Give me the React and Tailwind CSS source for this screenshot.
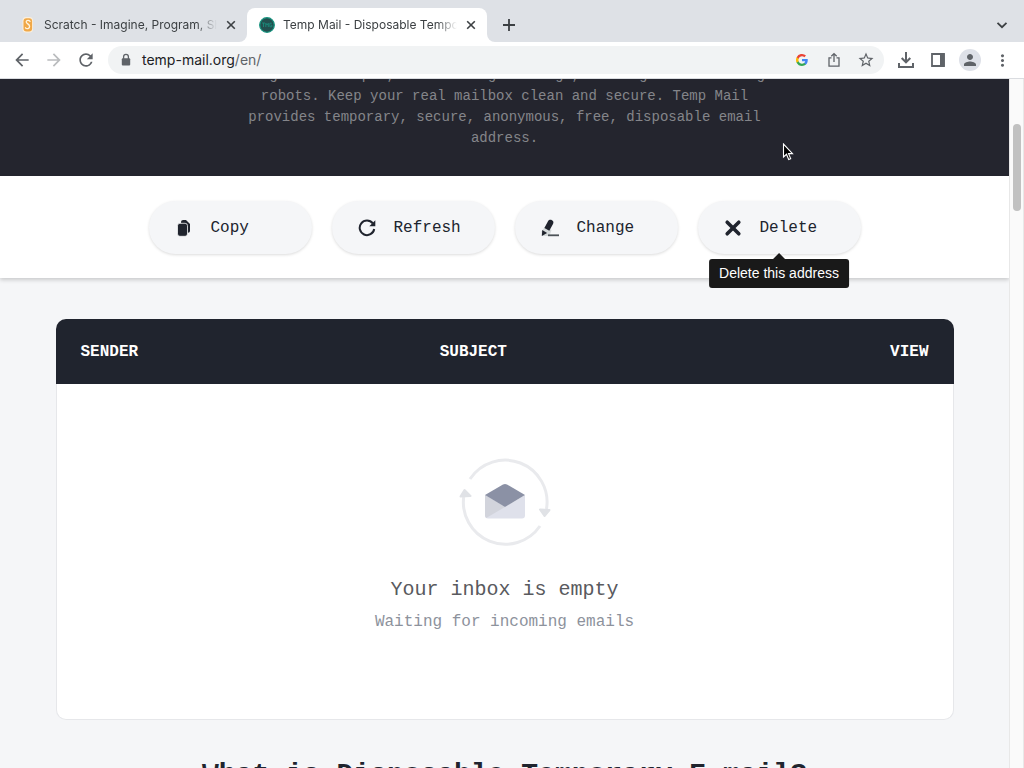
import { MdArrowBack, MdArrowForward, MdRefresh, MdStarOutline, MdPerson, MdMoreVert } from "react-icons/md";

function ScratchIcon() {
  return (
    <svg viewBox="0 0 16 18" className="h-[18px] w-4 shrink-0" aria-hidden="true">
      <rect x="2.500" y="1" width="10.500" height="15.500" rx="3.500" fill="#fbefdc" />
      <rect x="3.500" y="2.200" width="8.600" height="13.200" rx="3" fill="#f0a848" />
      <path
        d="M10 5.400C9 4 6.600 4.100 6.200 5.600 5.900 7.800 9.400 7.900 9.600 10.200 9.700 12.700 6.700 13.400 5.500 11.800"
        fill="none"
        stroke="#fff4df"
        strokeWidth="1.300"
        strokeLinecap="round"
      />
    </svg>
  );
}

function TempMailIcon() {
  return (
    <svg viewBox="0 0 16 16" className="size-4 shrink-0" aria-hidden="true">
      <circle cx="8" cy="8" r="7.300" fill="#23504f" stroke="#17937f" strokeWidth="1.300" />
      <path
        d="M3 6h3M4.500 6v4M6.800 10V6.200l1.300 1.900 1.200-1.900V10M12.800 6.200h-1.900v3.600h2V8.200h-1"
        fill="none"
        stroke="#1b8c7c"
        strokeWidth="0.900"
      />
    </svg>
  );
}

function CloseIcon() {
  return (
    <svg viewBox="0 0 10 10" className="size-[10px]" aria-hidden="true">
      <path d="M1.200 1.200l7.600 7.600M8.800 1.200L1.200 8.800" stroke="#3c4043" strokeWidth="1.600" />
    </svg>
  );
}

function Tab({ icon, title, active }) {
  return (
    <div
      className={
        active
          ? "relative flex h-[34px] w-60 items-center rounded-t-lg bg-white pr-[6px] pl-3"
          : "flex h-[34px] w-[239px] items-center pr-[6px] pl-3"
      }
    >
      {active && (
        <>
          <span className="absolute bottom-0 -left-2 size-2 bg-white" aria-hidden="true">
            <span className="block size-2 rounded-br-lg bg-[#dee1e6]" />
          </span>
          <span className="absolute -right-2 bottom-0 size-2 bg-white" aria-hidden="true">
            <span className="block size-2 rounded-bl-lg bg-[#dee1e6]" />
          </span>
        </>
      )}
      {icon}
      <span className="ml-2 flex-1 overflow-hidden mask-r-from-88% mask-r-to-100% text-xs whitespace-nowrap text-[#3c4043]">
        {title}
      </span>
      <button type="button" aria-label="Close tab" className="ml-1 grid size-5 place-items-center">
        <CloseIcon />
      </button>
    </div>
  );
}

function ToolButton({ label, children }) {
  return (
    <button type="button" aria-label={label} className="grid size-8 shrink-0 place-items-center text-[#5f6368]">
      {children}
    </button>
  );
}

function BrowserBar() {
  return (
    <header className="shrink-0 font-[Inter,sans-serif]">
      <div className="flex items-end bg-[#dee1e6] pt-2 pl-2">
        <Tab icon={<ScratchIcon />} title="Scratch - Imagine, Program, Share" />
        <Tab icon={<TempMailIcon />} title="Temp Mail - Disposable Temporary Email" active />
        <button type="button" aria-label="New tab" className="ml-[5px] grid size-[34px] place-items-center">
          <svg viewBox="0 0 12 12" className="size-3" aria-hidden="true">
            <path d="M6 0v12M0 6h12" stroke="#3c4043" strokeWidth="1.800" />
          </svg>
        </button>
        <button type="button" aria-label="Search tabs" className="mr-[5px] ml-auto grid size-[34px] place-items-center">
          <svg viewBox="0 0 12 12" className="size-3" aria-hidden="true">
            <path d="M1.500 3.800L6 8.200l4.500-4.400" fill="none" stroke="#3c4043" strokeWidth="1.800" />
          </svg>
        </button>
      </div>
      <div className="flex h-[37px] items-center border-b border-[#dadce0] bg-white px-[6px]">
        <ToolButton label="Back">
          <MdArrowBack size={20} />
        </ToolButton>
        <ToolButton label="Forward">
          <MdArrowForward size={20} className="text-[#babcbe]" />
        </ToolButton>
        <ToolButton label="Reload">
          <MdRefresh size={20} />
        </ToolButton>
        <div className="mx-[6px] flex h-7 flex-1 items-center rounded-full bg-[#f1f3f4] pr-[2px] pl-[11px]">
          <svg viewBox="0 0 14 14" className="size-[14px] text-[#5f6368]" aria-hidden="true">
            <path d="M4.600 6V3.800a2.400 2.400 0 0 1 4.800 0V6" fill="none" stroke="currentColor" strokeWidth="1.300" />
            <rect x="2.800" y="5.300" width="8.400" height="7.200" rx="1" fill="currentColor" />
          </svg>
          <div className="ml-[9px] flex-1 text-sm text-[#5f6368]">
            <span className="text-[#202124]">temp-mail.org</span>/en/
          </div>
          <ToolButton label="Google">
            <svg viewBox="0 0 24 24" className="size-3" aria-hidden="true">
              <path fill="#4285f4" d="M23.500 12.300c0-.9-.1-1.600-.2-2.400H12v4.500h6.500c-.3 1.500-1.100 2.800-2.400 3.700v3h3.900c2.200-2.100 3.500-5.100 3.500-8.800z" />
              <path fill="#34a853" d="M12 24c3.200 0 6-1.100 8-2.900l-3.900-3c-1.100.7-2.500 1.200-4.100 1.200-3.100 0-5.800-2.100-6.700-5H1.300v3.100C3.300 21.400 7.300 24 12 24z" />
              <path fill="#fbbc05" d="M5.300 14.300a7.200 7.200 0 0 1 0-4.600V6.600h-4a12 12 0 0 0 0 10.800z" />
              <path fill="#ea4335" d="M12 4.700c1.800 0 3.400.6 4.600 1.800L20 3.100A12 12 0 0 0 1.300 6.600l4 3.100c.9-2.800 3.600-5 6.700-5z" />
            </svg>
          </ToolButton>
          <ToolButton label="Share">
            <svg viewBox="0 0 14 16" className="h-4 w-[14px]" aria-hidden="true">
              <path d="M4.500 5.800H2v8.300h10V5.800H9.500M7 10V2M4.300 4.300L7 1.600l2.700 2.700" fill="none" stroke="currentColor" strokeWidth="1.300" />
            </svg>
          </ToolButton>
          <ToolButton label="Bookmark">
            <MdStarOutline size={18} />
          </ToolButton>
        </div>
        <ToolButton label="Downloads">
          <svg viewBox="0 0 18 18" className="size-[18px]" aria-hidden="true">
            <path d="M9 1v10M4.700 7L9 11.300 13.300 7M2 12v4h14v-4" fill="none" stroke="currentColor" strokeWidth="2" />
          </svg>
        </ToolButton>
        <ToolButton label="Side panel">
          <svg viewBox="0 0 16 16" className="size-4" aria-hidden="true">
            <path d="M2 2h12v12H2z" fill="none" stroke="currentColor" strokeWidth="1.800" />
            <path d="M10 2h4.500v12H10z" fill="currentColor" />
          </svg>
        </ToolButton>
        <ToolButton label="Profile">
          <span className="grid size-[22px] place-items-center rounded-full bg-[#dee1e8]">
            <MdPerson size={18} />
          </span>
        </ToolButton>
        <ToolButton label="Menu">
          <MdMoreVert size={19} />
        </ToolButton>
      </div>
    </header>
  );
}

function CopyIcon() {
  return (
    <svg viewBox="0 0 18 18" className="size-[18px]" aria-hidden="true">
      <path d="M6 3.200C6 1.900 7 1 8.200 1H11l4 4v6.800c0 1.200-.8 2-2 2H12" fill="#20242e" />
      <rect x="2.500" y="4.300" width="10" height="13" rx="2.400" fill="#20242e" stroke="#f5f6f8" strokeWidth="0.800" />
    </svg>
  );
}

function RefreshIcon() {
  return (
    <svg viewBox="0 0 18 18" className="size-[18px]" aria-hidden="true">
      <path d="M14.800 4.400A7.300 7.300 0 1 0 16.200 10" fill="none" stroke="#20242e" strokeWidth="2" />
      <path d="M17.300 1.200v6h-6z" fill="#20242e" />
    </svg>
  );
}

function ChangeIcon() {
  return (
    <svg viewBox="0 0 18 18" className="size-[18px]" aria-hidden="true">
      <path d="M.5 12.500l4-5.500 6 4-2 6H1z" fill="#d5dadb" />
      <path d="M7 2.200C8 .6 9.500.4 11 1.200s1.800 2.200 1 3.800L8.300 11.800 3.400 9z" fill="#20242e" />
      <path d="M1.300 11l4.800 3L.8 17z" fill="#20242e" />
      <path d="M7 16.300h11" stroke="#4c5258" strokeWidth="1.800" />
    </svg>
  );
}

function DeleteIcon() {
  return (
    <svg viewBox="0 0 18 18" className="size-[18px]" aria-hidden="true">
      <path d="M3.200 3.200l11.600 11.600M14.800 3.200L3.200 14.800" stroke="#20242e" strokeWidth="3.600" strokeLinecap="round" />
    </svg>
  );
}

function ActionButton({ icon, children }) {
  return (
    <button
      type="button"
      className="flex h-[53px] w-[163px] items-center gap-[18px] rounded-full bg-[#f5f6f8] pl-[26px] text-base text-[#20242e] shadow-[0_1px_3px_rgba(0,0,0,0.14)]"
    >
      {icon}
      {children}
    </button>
  );
}

function InboxIcon() {
  return (
    <svg viewBox="0 0 92 88" className="h-[88px] w-[92px] overflow-visible" aria-hidden="true">
      <g fill="none" stroke="#e9eaed" strokeWidth="3">
        <path d="M11 20A42 42 0 0 1 87.500 50" />
        <path d="M81 67A42 42 0 0 1 5 36" />
      </g>
      <path d="M1.500 37.500l4-6.500 6 6zM81 50.500l9.500.5-5 6z" fill="#e0e2e6" stroke="#e0e2e6" strokeWidth="2" strokeLinejoin="round" />
      <path d="M26 36v20.500a3 3 0 0 0 3 3h34a3 3 0 0 0 3-3V36L46 48z" fill="#dfe1eb" />
      <path d="M26 36v20.500c0 1 .4 1.800 1.200 2.400L46 48z" fill="#d2d4dc" />
      <path d="M26 36l18-10.500q2-1 4 0L66 36 46 48z" fill="#8b91a5" />
    </svg>
  );
}

export default function App() {
  return (
    <div className="flex h-screen flex-col overflow-hidden bg-white">
      <BrowserBar />
      <div className="flex min-h-0 flex-1">
        <main className="min-w-0 flex-1 overflow-hidden bg-[#f5f6f8] font-['Liberation_Mono',monospace]">
          <section className="flex h-[97px] flex-col items-center justify-end overflow-hidden bg-[#24252e] pb-[27px]">
            <p className="max-w-[530px] text-center text-sm leading-[21px] text-[#84858a]">
              Forget about spam, advertising mailings, hacking and attacking robots. Keep your real mailbox clean and
              secure. Temp Mail provides temporary, secure, anonymous, free, disposable email address.
            </p>
          </section>

          <section className="flex justify-center gap-5 bg-white pt-[25px] pb-6 shadow-[0_2px_4px_rgba(0,0,0,0.18)]">
            <ActionButton icon={<CopyIcon />}>Copy</ActionButton>
            <ActionButton icon={<RefreshIcon />}>Refresh</ActionButton>
            <ActionButton icon={<ChangeIcon />}>Change</ActionButton>
            <div className="relative">
              <ActionButton icon={<DeleteIcon />}>Delete</ActionButton>
              <div
                role="tooltip"
                className="absolute top-full left-1/2 z-10 mt-[5px] -translate-x-1/2 rounded-[3px] bg-[#191919] px-[10px] py-1 font-['Liberation_Sans',sans-serif] text-sm leading-[21px] whitespace-nowrap text-white"
              >
                <svg viewBox="0 0 12 6" className="absolute bottom-full left-1/2 h-[6px] w-3 -translate-x-1/2" aria-hidden="true">
                  <path d="M0 6l6-6 6 6z" fill="#191919" />
                </svg>
                Delete this address
              </div>
            </div>
          </section>

          <section className="mx-auto mt-[41px] w-11/12 max-w-[898px]">
            <div className="overflow-hidden rounded-t-[10px]">
              <table className="w-full table-fixed bg-[#20242e] text-left text-base text-white">
                <thead>
                  <tr className="h-[65px]">
                    <th className="w-2/5 px-[25px] font-bold">SENDER</th>
                    <th className="w-2/5 px-[25px] font-bold">SUBJECT</th>
                    <th className="w-1/5 px-[25px] text-right font-bold">VIEW</th>
                  </tr>
                </thead>
              </table>
            </div>
            <div className="flex flex-col items-center rounded-b-[10px] border border-t-0 border-[#e6e7ea] bg-white pt-[75px] pb-[81px]">
              <InboxIcon />
              <p className="mt-[27px] text-xl leading-8 text-[#595a5e]">Your inbox is empty</p>
              <p className="text-base leading-8 text-[#8d929c]">Waiting for incoming emails</p>
            </div>
          </section>

          <h2 className="mt-[35px] text-center text-[28px] leading-10 font-bold text-[#20242e]">
            What is Disposable Temporary E-mail?
          </h2>
        </main>
        <div className="flex w-[15px] shrink-0 justify-center border-x border-[#e8e8e8] bg-[#fafafa] pt-[45px]" aria-hidden="true">
          <div className="h-[87px] w-2 rounded-full bg-[#c1c1c1]" />
        </div>
      </div>
      <svg viewBox="0 0 12 18" className="absolute top-[143px] left-[782px] h-[18px] w-3" aria-hidden="true">
        <path d="M1.500 1v13l3-2.700 2.200 5.200 2-.9-2.200-5h4z" fill="#000" stroke="#fff" strokeWidth="1.100" />
      </svg>
    </div>
  );
}
